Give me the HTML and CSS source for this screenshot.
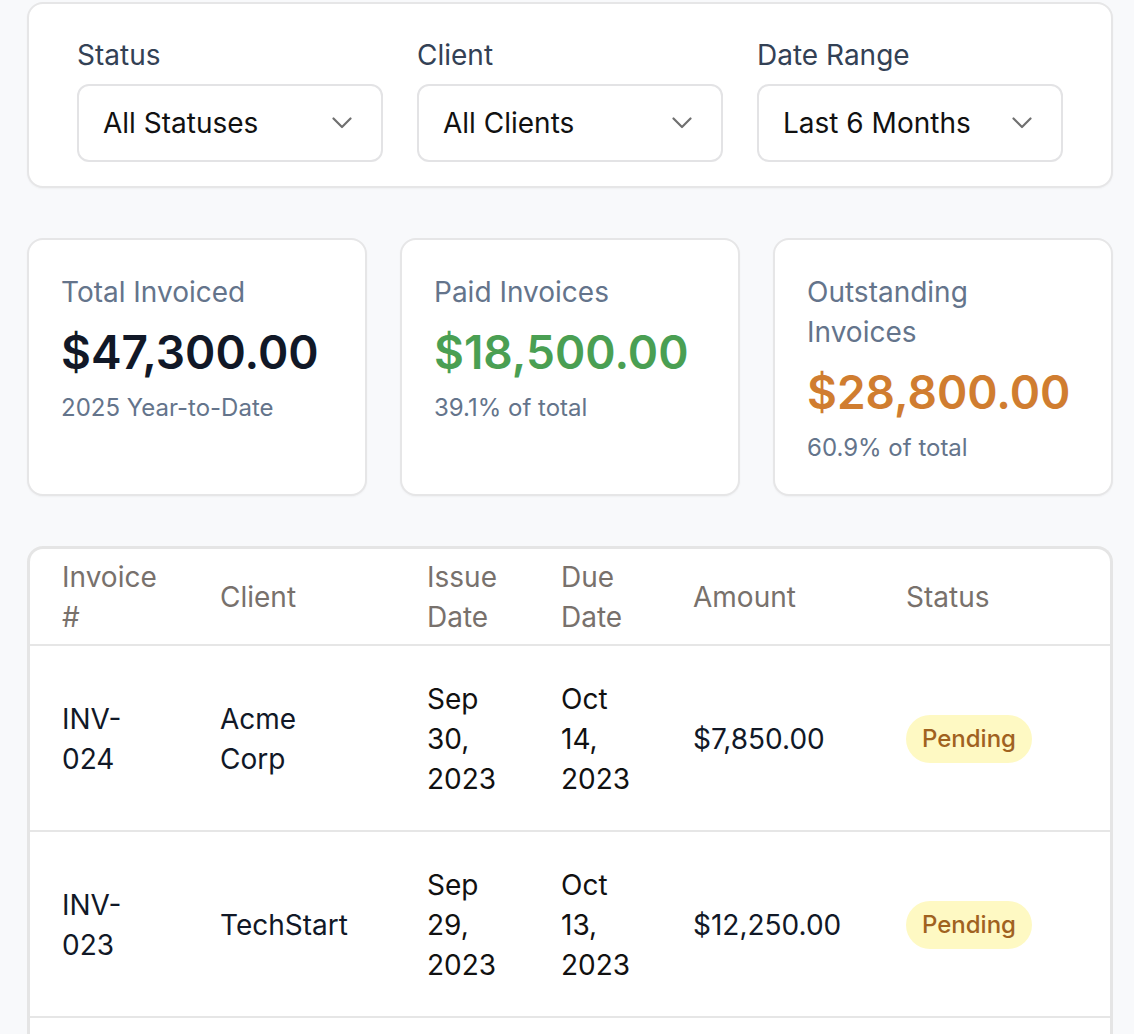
FILE: index.html
```html
<!DOCTYPE html>
<html lang="en">
<head>
<meta charset="utf-8">
<title>Invoices</title>
<link rel="stylesheet" href="styles.css">
</head>
<body>
<main class="page">
  <section class="card filters">
    <div class="field">
      <label class="field-label">Status</label>
      <div class="select"><span>All Statuses</span><svg class="chev" width="20" height="12" viewBox="0 0 20 12"><polyline points="1.5,1.5 10,10 18.5,1.5"/></svg></div>
    </div>
    <div class="field">
      <label class="field-label">Client</label>
      <div class="select"><span>All Clients</span><svg class="chev" width="20" height="12" viewBox="0 0 20 12"><polyline points="1.5,1.5 10,10 18.5,1.5"/></svg></div>
    </div>
    <div class="field">
      <label class="field-label">Date Range</label>
      <div class="select"><span>Last 6 Months</span><svg class="chev" width="20" height="12" viewBox="0 0 20 12"><polyline points="1.5,1.5 10,10 18.5,1.5"/></svg></div>
    </div>
  </section>

  <section class="stats">
    <div class="card stat">
      <div class="stat-label">Total Invoiced</div>
      <div class="stat-value">$47,300.00</div>
      <div class="stat-sub">2025 Year-to-Date</div>
    </div>
    <div class="card stat">
      <div class="stat-label">Paid Invoices</div>
      <div class="stat-value paid">$18,500.00</div>
      <div class="stat-sub">39.1% of total</div>
    </div>
    <div class="card stat">
      <div class="stat-label">Outstanding Invoices</div>
      <div class="stat-value due">$28,800.00</div>
      <div class="stat-sub">60.9% of total</div>
    </div>
  </section>

  <section class="table-card">
    <table class="invoices">
      <colgroup>
        <col class="c1"><col class="c2"><col class="c3"><col class="c4"><col class="c5"><col class="c6">
      </colgroup>
      <thead>
        <tr><th>Invoice #</th><th>Client</th><th>Issue Date</th><th>Due Date</th><th>Amount</th><th>Status</th></tr>
      </thead>
      <tbody>
        <tr><td>INV-024</td><td>Acme Corp</td><td class="date">Sep 30, 2023</td><td class="date">Oct 14, 2023</td><td>$7,850.00</td><td><span class="badge">Pending</span></td></tr>
        <tr><td>INV-023</td><td>TechStart</td><td class="date">Sep 29, 2023</td><td class="date">Oct 13, 2023</td><td>$12,250.00</td><td><span class="badge">Pending</span></td></tr>
      </tbody>
    </table>
  </section>
</main>
</body>
</html>
```

FILE: styles.css
```css
* { box-sizing: border-box; }

html, body {
  margin: 0;
  background: #f8f9fb;
  font-family: Inter, "Noto Sans", "Liberation Sans", sans-serif;
  color: #111827;
}

.page {
  padding: 2px 21px 0 27px;
  display: flex;
  flex-direction: column;
  gap: 50px;
}

.card {
  background: #fff;
  border: 2px solid #e6e6e7;
  border-radius: 16px;
  box-shadow: 0 1px 2px rgba(0, 0, 0, 0.04);
}

/* Filters */
.filters {
  display: grid;
  grid-template-columns: repeat(3, 1fr);
  column-gap: 34px;
  padding: 31px 48px 24px 48px;
}

.field {
  display: flex;
  flex-direction: column;
  gap: 9px;
}

.field-label {
  font-size: 28px;
  line-height: 40px;
  color: #334155;
}

.select {
  height: 78px;
  border: 2px solid #e3e3e5;
  border-radius: 12px;
  display: flex;
  align-items: center;
  justify-content: space-between;
  padding: 0 29px 0 24px;
  font-size: 28px;
  line-height: 40px;
  color: #111111;
}

.chev {
  fill: none;
  stroke: #707070;
  stroke-width: 2.2;
  stroke-linecap: round;
  stroke-linejoin: round;
}

/* Stats */
.stats {
  display: grid;
  grid-template-columns: repeat(3, 1fr);
  gap: 33px;
}

.stat {
  height: 258px;
  padding: 32px 32px;
}

.stat-label {
  font-size: 28px;
  line-height: 40px;
  color: #64748b;
}

.stat-value {
  margin-top: 12px;
  font-size: 46px;
  line-height: 56px;
  font-weight: 600;
  color: #111827;
}

.stat-value.paid { color: #4a9f53; }
.stat-value.due { color: #d07d30; }

.stat-sub {
  margin-top: 12px;
  font-size: 24px;
  line-height: 32px;
  color: #64748b;
}

/* Table */
.table-card {
  background: #fff;
  border: 3px solid #e5e5e5;
  border-bottom: none;
  border-radius: 16px 16px 0 0;
  overflow: hidden;
  padding-bottom: 60px;
}

.invoices {
  width: 100%;
  table-layout: fixed;
  border-collapse: collapse;
  font-size: 28px;
  line-height: 40px;
}

.c1 { width: 158px; }
.c2 { width: 207px; }
.c3 { width: 134px; }
.c4 { width: 132px; }
.c5 { width: 213px; }

.invoices th {
  text-align: left;
  font-weight: 400;
  color: #78716c;
  padding: 8px 24px 7px 32px;
  vertical-align: middle;
  border-bottom: 2px solid #e6e6e6;
}

.invoices td {
  padding: 33px 24px 31px 32px;
  vertical-align: middle;
  border-bottom: 2px solid #e6e6e6;
  color: #111827;
}

.invoices th:nth-child(2),
.invoices td:nth-child(2) {
  padding-right: 40px;
}

.invoices td.date { color: #111111; }

.badge {
  display: inline-block;
  height: 48px;
  line-height: 48px;
  padding: 0 16px;
  border-radius: 24px;
  background: #fef9c3;
  color: #a0621f;
  font-size: 24px;
  font-weight: 500;
}
```
